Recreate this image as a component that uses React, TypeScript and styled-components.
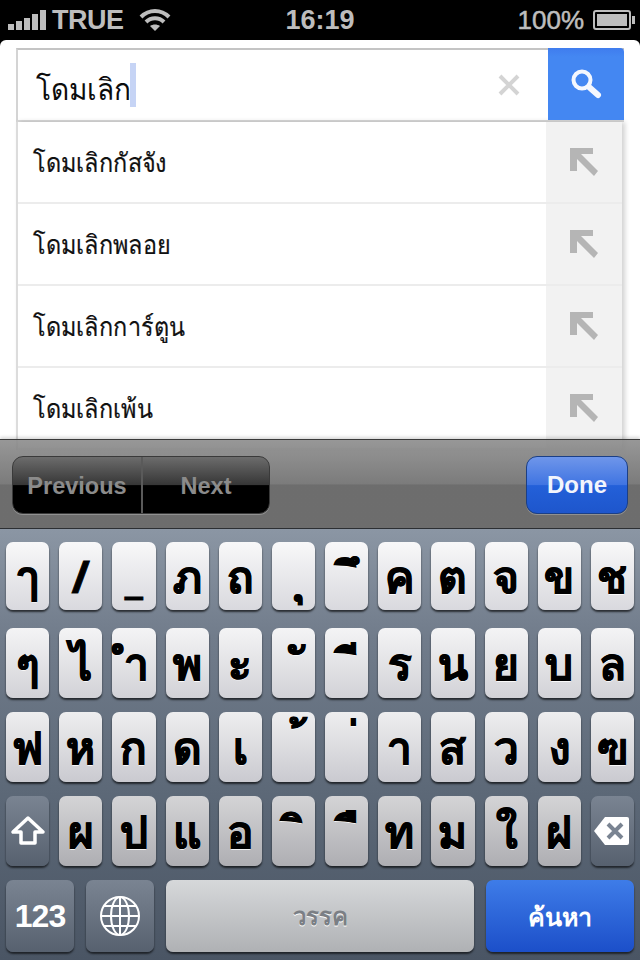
import React from "react";
import styled, { createGlobalStyle } from "styled-components";

const Global = createGlobalStyle`
  html, body { margin: 0; padding: 0; background: #000; }
  body { font-family: "Liberation Sans", Arial, sans-serif; }
`;
const Screen = styled.div`
  position: relative; width: 640px; height: 960px; overflow: hidden; background: #000;
  display: flex; flex-direction: column;
`;
const StatusBar = styled.div`
  height: 40px; flex: none; display: grid; grid-template-columns: 1fr auto 1fr; align-items: center;
  padding: 0 4px 0 8px; color: #bdbdbd; font-size: 27px; font-weight: 700; line-height: 40px; box-sizing: border-box;
`;
const StatusLeft = styled.div`display: flex; align-items: center; gap: 6px;`;
const Carrier = styled.span`letter-spacing: -.5px;`;
const StatusRight = styled.div`display: flex; align-items: center; justify-content: flex-end; gap: 9px; font-size: 26px; font-weight: 400; -webkit-text-stroke: .5px #bdbdbd;`;
const Clock = styled.div`padding-right: 4px;`;
const Wifi = styled.svg`margin-left: 9px;`;
const Page = styled.div`
  flex: 1; background: #fff; border-radius: 6px 6px 0 0; padding: 8px 16px 0 16px; overflow: hidden;
`;
const SearchBox = styled.div`
  display: flex; height: 74px; box-sizing: border-box; border-top: 2px solid #c4c4c4; border-left: 2px solid #d4d4d4;
  border-bottom: 2px solid #d9d9d9; width: 608px;
`;
const InputArea = styled.div`
  flex: 1; display: flex; align-items: center; padding-left: 18px; font-family: "Noto Sans", "DejaVu Sans", sans-serif; font-size: 30px; color: #0c0c0c;
`;
const InputText = styled.span`
  display: inline-block; transform: scaleX(.935); transform-origin: left center; margin-right: -7px; margin-top: 8px;
`;
const Caret = styled.span`display: block; width: 6px; height: 44px; background: #c6d4f5;`;
const Clear = styled.div`width: 78px; display: flex; align-items: center; justify-content: center;`;
const SearchButton = styled.div`
  width: 76px; margin: -2px 0 0; background: linear-gradient(180deg, #3f7cee, #4487f2 12%); border-radius: 0 4px 0 0; display: flex; align-items: center; justify-content: center;
`;
const List = styled.div`
  width: 606px; border-left: 2px solid #dcdcdc; box-shadow: 3px 0 5px rgba(0,0,0,.18); box-sizing: border-box;
`;
const Row = styled.div`display: flex; height: 82px; box-sizing: border-box; border-bottom: 2px solid #ececec;`;
const RowText = styled.div`
  flex: 1; display: flex; align-items: center; padding-left: 15px; font-family: "Noto Sans", "DejaVu Sans", sans-serif; font-size: 26px; color: #111; -webkit-text-stroke: .2px #111;
`;
const RowLabel = styled.span`display: inline-block; transform: scaleX(.9); transform-origin: left center;`;
const RowArrow = styled.div`width: 76px; background: #f2f2f2; display: flex; align-items: center; justify-content: center;`;

const Toolbar = styled.div`
  position: absolute; left: 0; right: 0; top: 439px; height: 90px; box-sizing: border-box; border-top: 1px solid #3a3a3a; border-bottom: 1px solid #2c2f33;
  box-shadow: 0 -2px 3px rgba(0,0,0,.15);
  background: linear-gradient(180deg, rgba(140,140,140,.9) 0, rgba(112,112,112,.92) 50%, rgba(98,98,98,.93) 51%, rgba(98,98,98,.93) 100%);
  display: flex; align-items: center; justify-content: space-between; padding: 2px 12px 0;
`;
const Segmented = styled.div`
  display: flex; width: 258px; height: 58px; box-sizing: border-box; border-radius: 11px; border: 1px solid #3a3a3a; overflow: hidden;
  background: linear-gradient(180deg, #6c6c6c 0, #363636 50%, #000 51%, #000 100%); box-shadow: 0 1px 0 rgba(255,255,255,.25);
`;
const SegButton = styled.div<{ $w: number }>`
  width: ${(p) => p.$w}px; display: flex; align-items: center; justify-content: center; padding-top: 2px; box-sizing: border-box; color: #8b8b8b; font-size: 23.5px; font-weight: 700;
  & + & { border-left: 2px solid #5a5a5a; }
`;
const Done = styled.div`
  width: 102px; height: 58px; box-sizing: border-box; border: 1px solid #1b3f86; border-radius: 11px; color: #f2f5fc; font-size: 24px; font-weight: 700;
  display: flex; align-items: center; justify-content: center; box-shadow: 0 1px 0 rgba(255,255,255,.25);
  background: linear-gradient(180deg, #6f96ea 0, #3f74e2 50%, #2360d9 51%, #1e56cc 100%);
`;
const Keyboard = styled.div`
  position: absolute; left: 0; right: 0; top: 529px; height: 431px; padding: 13px 6px 0; box-sizing: border-box;
  background: linear-gradient(180deg, #8b96a4 0, #717c8b 25%, #5d6978 60%, #4a5564 100%);
`;
const KeyRow = styled.div<{ $h: number; $top: number }>`
  display: grid; grid-template-columns: repeat(12, minmax(0, 1fr)); gap: 10px; height: ${(p) => p.$h}px; margin-top: ${(p) => p.$top}px;
`;
const Key = styled.div<{ $from: string; $to: string; $pad: number }>`
  display: flex; align-items: center; justify-content: center; border-radius: 7px; min-width: 0; box-sizing: border-box;
  padding-left: ${(p) => p.$pad}px;
  background: linear-gradient(180deg, ${(p) => p.$from}, ${(p) => p.$to});
  box-shadow: 0 2px 2px rgba(0,0,0,.65);
  font-family: "Noto Sans", "DejaVu Sans", sans-serif; font-weight: 700; font-size: 44px; color: #000;
  -webkit-text-stroke: .8px #000; text-shadow: 0 1px 0 #fff; line-height: 1;
`;
const FnKey = styled.div<{ $w?: number }>`
  ${(p) => (p.$w ? `flex: 0 0 ${p.$w}px;` : "")}
  display: flex; align-items: center; justify-content: center; border-radius: 7px;
  background: linear-gradient(180deg, #7a8492, #57616f); box-shadow: 0 2px 2px rgba(0,0,0,.6);
  color: #fff; font-size: 32px; letter-spacing: -1px; font-weight: 700;
`;
const BottomRow = styled.div`display: flex; gap: 12px; height: 72px; margin-top: 14px;`;
const SpaceKey = styled.div`
  flex: 1; display: flex; align-items: center; justify-content: center; border-radius: 7px;
  background: linear-gradient(180deg, #d6d8da, #afb1b4); box-shadow: 0 2px 2px rgba(0,0,0,.6);
  font-family: "Noto Sans", "DejaVu Sans", sans-serif; font-size: 24px; font-weight: 700; color: #7b7f85; text-shadow: 0 1px 0 #fff;
`;
const GoKey = styled.div`
  flex: 0 0 148px; display: flex; align-items: center; justify-content: center; padding-top: 2px; box-sizing: border-box; border-radius: 7px;
  background: linear-gradient(180deg, #3e7ce8, #1c4fc9); box-shadow: 0 2px 2px rgba(0,0,0,.6);
  font-family: "Noto Sans", "DejaVu Sans", sans-serif; font-size: 25px; font-weight: 700; color: #fff;
`;

const Arrow = () => (
  <svg width="28" height="28" viewBox="0 0 28 28"><path d="M0 0H23V6H11L28 23l-4 5L7 11V23H0z" fill="#b5b5b5" /></svg>
);

const NB = "\u00A0";
const MARKS = "ุึัี้่ิื";
const rows = [
  { h: 68, t: 0, from: "#f8f8f9", to: "#d9d9de", keys: "ๅ / _ ภ ถ ุ ึ ค ต จ ข ช" },
  { h: 70, t: 18, from: "#f4f4f5", to: "#d2d2d7", keys: "ๆ ไ ำ พ ะ ั ี ร น ย บ ล" },
  { h: 70, t: 14, from: "#eeeeef", to: "#cacad0", keys: "ฟ ห ก ด เ ้ ่ า ส ว ง ฃ" },
];
const row4 = "ผ ป แ อ ิ ื ท ม ใ ฝ".split(" ");
const suggestions = ["โดมเลิกกัสจัง", "โดมเลิกพลอย", "โดมเลิกการ์ตูน", "โดมเลิกเพ้น"];

const isMark = (k: string) => MARKS.includes(k);
const label = (k: string) => (isMark(k) ? NB + k : k);
const pad = (k: string) => (isMark(k) ? 12 : k === "ำ" ? 6 : 0);

export default function App() {
  return (
    <Screen>
      <Global />
      <StatusBar>
        <StatusLeft>
          <svg width="38" height="20" viewBox="0 0 38 20" fill="#bdbdbd"><rect x="0" y="14" width="6" height="6" /><rect x="8" y="11" width="6" height="9" /><rect x="16" y="8" width="6" height="12" /><rect x="24" y="4" width="6" height="16" /><rect x="32" y="0" width="6" height="20" /></svg>
          <Carrier>TRUE</Carrier>
          <Wifi width="32" height="24" viewBox="0 0 32 24" fill="none" stroke="#bdbdbd" strokeWidth="4"><path d="M2 9c8-8 20-8 28 0M7 14c5-5 13-5 18 0" /><path d="M16 23l-5-5c3-2 7-2 10 0z" fill="#bdbdbd" stroke="none" /></Wifi>
        </StatusLeft>
        <Clock>16:19</Clock>
        <StatusRight>
          <span>100%</span>
          <svg width="43" height="20" viewBox="0 0 43 20"><rect x="1" y="1" width="36" height="18" rx="2" fill="none" stroke="#bdbdbd" strokeWidth="2" /><rect x="4" y="4" width="30" height="12" fill="#bdbdbd" /><rect x="39" y="6" width="3" height="8" fill="#bdbdbd" /></svg>
        </StatusRight>
      </StatusBar>
      <Page>
        <SearchBox>
          <InputArea><InputText>โดมเลิก</InputText><Caret /></InputArea>
          <Clear>
            <svg width="22" height="22" viewBox="0 0 22 22" stroke="#d4d4d4" strokeWidth="4"><path d="M2 2l18 18M20 2L2 20" /></svg>
          </Clear>
          <SearchButton>
            <svg width="32" height="32" viewBox="0 0 32 32" fill="none" stroke="#f4f7fe"><circle cx="12" cy="12" r="8.5" strokeWidth="4" /><path d="M19 19l9 8" strokeWidth="6" strokeLinecap="round" /></svg>
          </SearchButton>
        </SearchBox>
        <List>
          {suggestions.map((s) => (
            <Row key={s}>
              <RowText><RowLabel>{s}</RowLabel></RowText>
              <RowArrow><Arrow /></RowArrow>
            </Row>
          ))}
        </List>
      </Page>
      <Toolbar>
        <Segmented>
          <SegButton $w={128}>Previous</SegButton>
          <SegButton $w={128}>Next</SegButton>
        </Segmented>
        <Done>Done</Done>
      </Toolbar>
      <Keyboard>
        {rows.map((r) => (
          <KeyRow key={r.h + r.from} $h={r.h} $top={r.t}>
            {r.keys.split(" ").map((k) => <Key key={k} $from={r.from} $to={r.to} $pad={pad(k)}>{label(k)}</Key>)}
          </KeyRow>
        ))}
        <KeyRow $h={70} $top={14}>
          <FnKey>
            <svg width="36" height="32" viewBox="0 0 36 32" fill="none" stroke="#fff" strokeWidth="3.5" strokeLinejoin="round"><path d="M18 3L3 17h8v11h14V17h8z" /></svg>
          </FnKey>
          {row4.map((k) => <Key key={k} $from="#d4d4d6" $to="#aeaeb3" $pad={pad(k)}>{label(k)}</Key>)}
          <FnKey>
            <svg width="36" height="30" viewBox="0 0 36 30"><path d="M11 1h22a2 2 0 0 1 2 2v24a2 2 0 0 1-2 2H11L0 15z" fill="#fff" /><path d="M14 8l14 14M28 8L14 22" stroke="#7a8492" strokeWidth="4" /></svg>
          </FnKey>
        </KeyRow>
        <BottomRow>
          <FnKey $w={68}>123</FnKey>
          <FnKey $w={68}>
            <svg width="42" height="42" viewBox="0 0 42 42" fill="none" stroke="#fff" strokeWidth="2"><circle cx="21" cy="21" r="19" /><ellipse cx="21" cy="21" rx="9" ry="19" /><path d="M21 2v38M2 21h38M5 11h32M5 31h32" /></svg>
          </FnKey>
          <SpaceKey>วรรค</SpaceKey>
          <GoKey>ค้นหา</GoKey>
        </BottomRow>
      </Keyboard>
    </Screen>
  );
}
